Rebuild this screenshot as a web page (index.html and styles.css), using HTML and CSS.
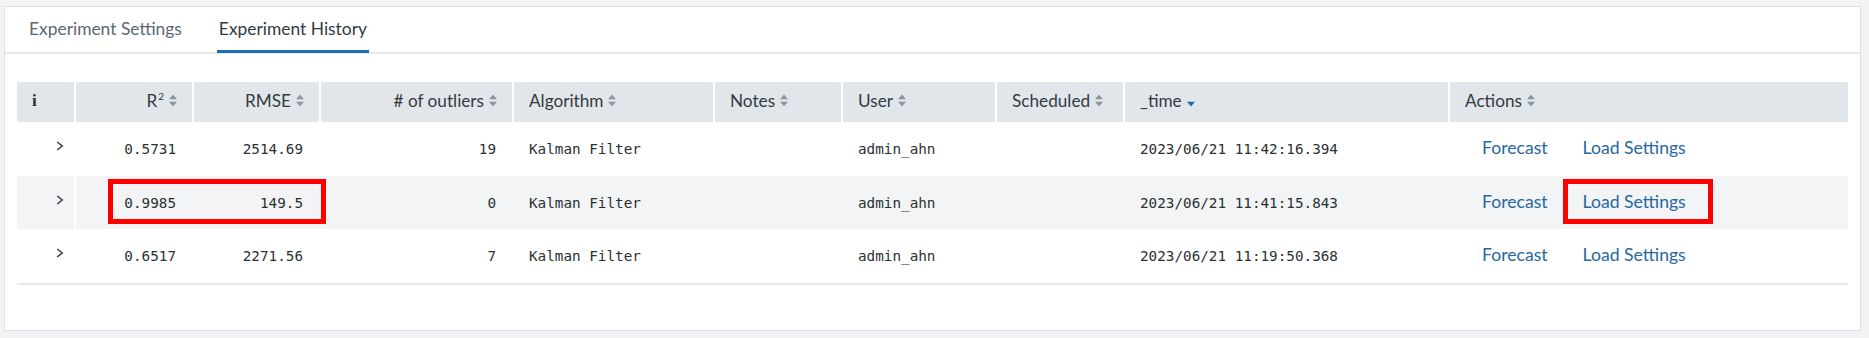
FILE: index.html
```html
<!DOCTYPE html>
<html>
<head>
<meta charset="utf-8">
<link rel="stylesheet" href="styles.css">
</head>
<body>
<div class="panel">
  <div class="tabs">
    <div class="tab">Experiment Settings</div>
    <div class="tab active">Experiment History</div>
  </div>
  <div class="table-wrap">
    <div class="table">
      <div class="row head">
        <div class="cell info">i</div>
        <div class="cell num"><span>R<sup>2</sup></span><svg class="sort" viewBox="0 0 8 13"><path d="M0 5.2L4 0.5L8 5.2Z M0 7.8L4 12.5L8 7.8Z"/></svg></div>
        <div class="cell num">RMSE<svg class="sort" viewBox="0 0 8 13"><path d="M0 5.2L4 0.5L8 5.2Z M0 7.8L4 12.5L8 7.8Z"/></svg></div>
        <div class="cell num"># of outliers<svg class="sort" viewBox="0 0 8 13"><path d="M0 5.2L4 0.5L8 5.2Z M0 7.8L4 12.5L8 7.8Z"/></svg></div>
        <div class="cell">Algorithm<svg class="sort" viewBox="0 0 8 13"><path d="M0 5.2L4 0.5L8 5.2Z M0 7.8L4 12.5L8 7.8Z"/></svg></div>
        <div class="cell">Notes<svg class="sort" viewBox="0 0 8 13"><path d="M0 5.2L4 0.5L8 5.2Z M0 7.8L4 12.5L8 7.8Z"/></svg></div>
        <div class="cell">User<svg class="sort" viewBox="0 0 8 13"><path d="M0 5.2L4 0.5L8 5.2Z M0 7.8L4 12.5L8 7.8Z"/></svg></div>
        <div class="cell">Scheduled<svg class="sort" viewBox="0 0 8 13"><path d="M0 5.2L4 0.5L8 5.2Z M0 7.8L4 12.5L8 7.8Z"/></svg></div>
        <div class="cell">_time<svg class="sort active" viewBox="0 0 8 13"><path d="M0 7.8L4 12.5L8 7.8Z"/></svg></div>
        <div class="cell">Actions<svg class="sort" viewBox="0 0 8 13"><path d="M0 5.2L4 0.5L8 5.2Z M0 7.8L4 12.5L8 7.8Z"/></svg></div>
      </div>

      <div class="row">
        <div class="cell expand"><svg class="chev" viewBox="0 0 8 10"><path d="M1.2 1L6.2 5L1.2 9"/></svg></div>
        <div class="cell num mono first">0.5731</div>
        <div class="cell num mono">2514.69</div>
        <div class="cell num mono">19</div>
        <div class="cell mono">Kalman Filter</div>
        <div class="cell mono"></div>
        <div class="cell mono">admin_ahn</div>
        <div class="cell mono"></div>
        <div class="cell mono">2023/06/21 11:42:16.394</div>
        <div class="cell actions"><a class="link">Forecast</a><a class="link">Load Settings</a></div>
      </div>

      <div class="row striped">
        <div class="cell expand"><svg class="chev" viewBox="0 0 8 10"><path d="M1.2 1L6.2 5L1.2 9"/></svg></div>
        <div class="cell num mono first">0.9985</div>
        <div class="cell num mono">149.5</div>
        <div class="cell num mono">0</div>
        <div class="cell mono">Kalman Filter</div>
        <div class="cell mono"></div>
        <div class="cell mono">admin_ahn</div>
        <div class="cell mono"></div>
        <div class="cell mono">2023/06/21 11:41:15.843</div>
        <div class="cell actions"><a class="link">Forecast</a><a class="link">Load Settings</a></div>
      </div>

      <div class="row last">
        <div class="cell expand"><svg class="chev" viewBox="0 0 8 10"><path d="M1.2 1L6.2 5L1.2 9"/></svg></div>
        <div class="cell num mono first">0.6517</div>
        <div class="cell num mono">2271.56</div>
        <div class="cell num mono">7</div>
        <div class="cell mono">Kalman Filter</div>
        <div class="cell mono"></div>
        <div class="cell mono">admin_ahn</div>
        <div class="cell mono"></div>
        <div class="cell mono">2023/06/21 11:19:50.368</div>
        <div class="cell actions"><a class="link">Forecast</a><a class="link">Load Settings</a></div>
      </div>

      <div class="mark mark-metrics"></div>
      <div class="mark mark-load"></div>
    </div>
  </div>
</div>
</body>
</html>
```

FILE: styles.css
```css
html, body {
  margin: 0;
  padding: 0;
}
body {
  background: #f2f3f5;
  padding: 6px 8px 0 4px;
  height: 338px;
  box-sizing: border-box;
  overflow: hidden;
  font-family: "Lato", "Liberation Sans", sans-serif;
  color: #3c444d;
}
.panel {
  background: #fff;
  border: 1px solid #dcdfe3;
  padding-bottom: 45px;
}
.tabs {
  display: flex;
  height: 45px;
  border-bottom: 2px solid #e6e9ec;
  padding-left: 22px;
  gap: 33px;
}
.tab {
  height: 43px;
  padding: 0 2px;
  display: flex;
  align-items: center;
  font-size: 17.4px;
  color: #5c6773;
  border-bottom: 3px solid transparent;
}
.tab.active {
  color: #333a42;
  border-bottom-color: #1a6fb3;
}
.table-wrap {
  padding: 28px 12px 0 12px;
}
.table {
  position: relative;
}
.row {
  display: grid;
  grid-template-columns: 57px 118px 127px 193px 201px 128px 154px 128px 325px 400px;
  height: 54px;
}
.row.head {
  height: 40px;
  background: #e1e6eb;
}
.row.striped {
  background: #f2f4f5;
  height: 53px;
}
.row.last {
  border-bottom: 2px solid #e6e9ec;
}
.cell {
  display: flex;
  align-items: center;
  padding: 0 15px;
  border-left: 2px solid transparent;
  min-width: 0;
  white-space: nowrap;
}
.head .cell {
  border-left-color: #fff;
  font-size: 17.2px;
  color: #333a42;
  padding-bottom: 3px;
}
.head .cell:first-child,
.row .cell:first-child {
  border-left: 0;
}
.cell.num {
  justify-content: flex-end;
  padding-right: 15px;
}
.cell.info {
  font-family: "Liberation Serif", "DejaVu Serif", serif;
  font-weight: bold;
  font-size: 17px;
  color: #2b3033;
}
sup {
  font-size: 10px;
  line-height: 0;
  vertical-align: 7px;
  margin-left: 1px;
}
.sort {
  width: 8px;
  height: 13px;
  margin-left: 5px;
  fill: #8d979f;
  flex: none;
}
.sort.active {
  fill: #1a6fb3;
}
.cell.first {
  border-left-color: #fff;
}
.mono {
  font-family: "DejaVu Sans Mono", "Liberation Mono", monospace;
  font-size: 14.3px;
  color: #2b3033;
}
.cell.num.mono {
  padding-right: 16px;
}
.cell.expand {
  padding: 0 0 0 39px;
}
.chev {
  flex: none;
  width: 8px;
  height: 10px;
  fill: none;
  stroke: #3c444d;
  stroke-width: 1.6;
  margin-bottom: 6px;
}
.cell.actions {
  padding-left: 14px;
}
.link {
  font-size: 17.6px;
  color: #26689f;
  padding: 0 17px 0 18px;
  margin-bottom: 3px;
}
.mark {
  position: absolute;
  border: 5px solid #ff0000;
  box-sizing: border-box;
  top: 97px;
  height: 45px;
}
.mark-metrics {
  left: 91px;
  width: 218px;
}
.mark-load {
  left: 1546px;
  width: 150px;
}
```
